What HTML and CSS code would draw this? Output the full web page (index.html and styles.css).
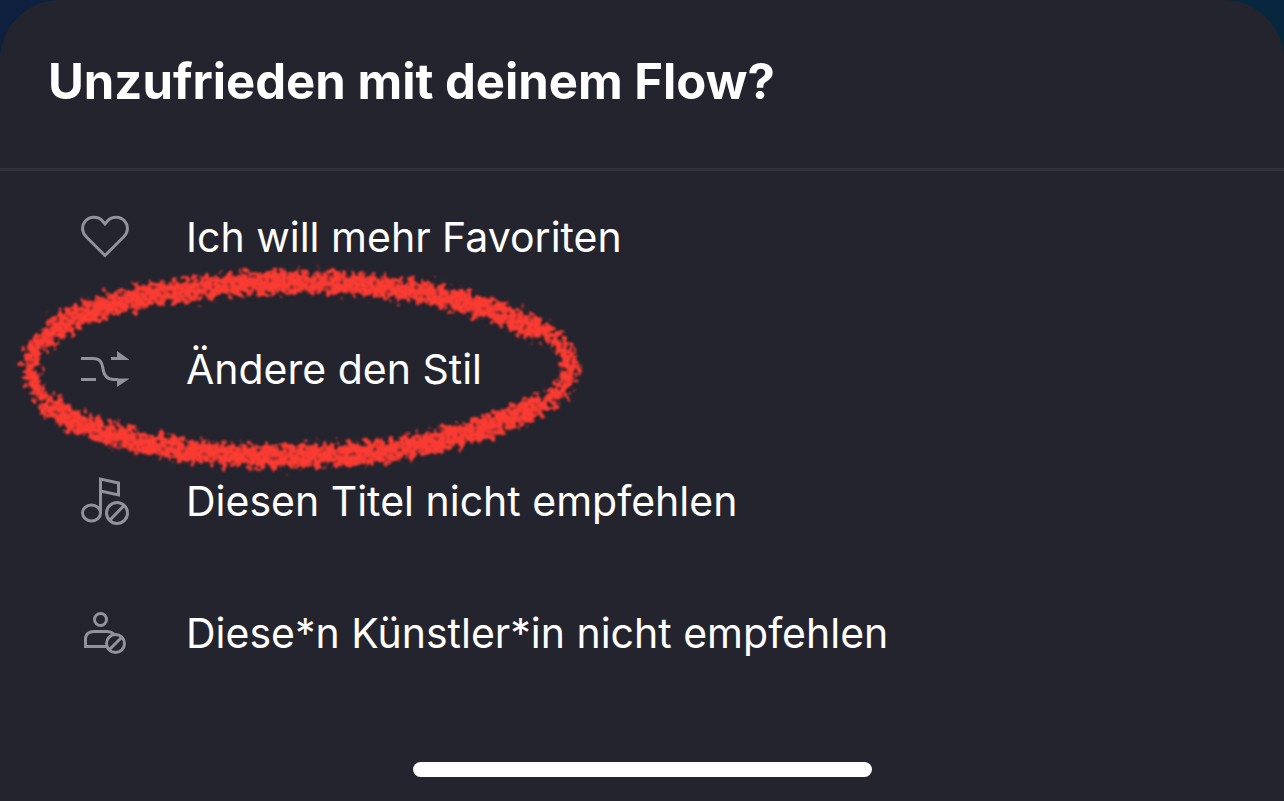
FILE: index.html
```html
<!DOCTYPE html>
<html lang="de">
<head>
<meta charset="utf-8">
<meta name="viewport" content="width=device-width, initial-scale=1">
<title>Unzufrieden mit deinem Flow?</title>
<link rel="stylesheet" href="styles.css">
</head>
<body>
<main class="sheet">
  <header class="sheet-header">
    <h1 class="title">Unzufrieden mit deinem Flow?</h1>
  </header>
  <ul class="options">
    <li class="option">
      <button class="option-button" type="button">
        <svg class="icon" viewBox="0 0 50 50" aria-hidden="true"><path d="M25 43.500 6.500 25C1.500 20 1.500 13.500 5 9.500C9.500 4 18 4 22.500 9L25 12 27.500 9C32 4 40.500 4 45 9.500C48.500 13.500 48.500 20 43.500 25Z"/></svg>
        <span>Ich will mehr Favoriten</span>
      </button>
    </li>
    <li class="option">
      <button class="option-button" type="button">
        <svg class="icon" viewBox="0 0 50 50" aria-hidden="true"><path d="M1 14.500H13C20 14.500 22 18 23 25C24 32 28 35.500 34 35.500H38M1 35.500H16M31 14.500H38"/><path class="solid" d="M37 7 49 15.500V16H37ZM37 34.500H49V35L37 43Z"/></svg>
        <span>Ändere den Stil</span>
      </button>
      <svg class="marker" viewBox="0 0 570 220" aria-hidden="true">
        <defs>
          <filter id="crayon" filterUnits="userSpaceOnUse" x="0" y="0" width="570" height="220">
            <feTurbulence type="fractalNoise" baseFrequency="0.16" numOctaves="3" seed="8" result="noise"/>
            <feDisplacementMap in="SourceGraphic" in2="noise" scale="22" xChannelSelector="R" yChannelSelector="G" result="rough"/>
            <feTurbulence type="fractalNoise" baseFrequency="0.24" numOctaves="2" seed="21" result="grain"/>
            <feColorMatrix in="grain" type="matrix" values="0 0 0 0 0  0 0 0 0 0  0 0 0 0 0  0 0 0 4 -0.600" result="holes"/>
            <feComposite in="rough" in2="holes" operator="in" result="textured"/>
            <feGaussianBlur in="textured" stdDeviation="0.800"/>
          </filter>
        </defs>
        <g filter="url(#crayon)">
          <path class="stroke-thin" d="M15 106C16 66 82 42 162 29C222 20 312 15 385 26C465 37 551 64 556 104C557 151 449 178 385 190C310 201 240 200 162 190C95 179 15 150 15 106Z"/>
          <path class="stroke-wide" d="M37 72C66 47 113 37 162 31C222 20 312 17 385 28C438 35 486 49 520 69M37 147C79 173 123 182 162 188C240 199 310 198 385 188C432 179 488 163 522 144"/>
        </g>
      </svg>
    </li>
    <li class="option">
      <button class="option-button" type="button">
        <svg class="icon" viewBox="0 0 50 50" aria-hidden="true"><ellipse cx="11.500" cy="37" rx="9" ry="8"/><path d="M20.500 37V3L38.500 7V19L20.500 15M29.500 44.500 44.500 29"/><circle cx="37" cy="37" r="10.500"/></svg>
        <span>Diesen Titel nicht empfehlen</span>
      </button>
    </li>
    <li class="option">
      <button class="option-button" type="button">
        <svg class="icon" viewBox="0 0 50 50" aria-hidden="true"><circle cx="20.500" cy="11.500" r="6"/><path d="M26 38.500H5.500V31C5.500 26 9 23.500 14 23.500H27C30 23.500 32 24.500 34 26M29.500 41.500 42 29"/><circle cx="35.500" cy="35.500" r="9"/></svg>
        <span>Diese*n Künstler*in nicht empfehlen</span>
      </button>
    </li>
  </ul>
  <div class="home-indicator"></div>
</main>
</body>
</html>
```
FILE: styles.css
```css
* {
  box-sizing: border-box;
}

body {
  margin: 0;
  background: linear-gradient(90deg, #0f203f, #07273f);
  color: #fff;
  font-family: Inter, "Liberation Sans", sans-serif;
}

.sheet {
  display: flex;
  flex-direction: column;
  min-height: 100vh;
  overflow: hidden;
  background: #24242e;
  border-radius: 60px 60px 0 0;
}

.sheet-header {
  padding: 50px 48px 54px;
  border-bottom: 3px solid #31313d;
}

.title {
  margin: 0;
  font-size: 49px;
  line-height: 64px;
  font-weight: 700;
}

.options {
  margin: 0;
  padding: 0;
  list-style: none;
}

.option {
  position: relative;
}

.option-button {
  display: flex;
  align-items: center;
  gap: 56px;
  width: 100%;
  padding: 40px 80px;
  border: 0;
  background: none;
  color: inherit;
  font: inherit;
  font-size: 41px;
  line-height: 52px;
  text-align: left;
  cursor: pointer;
}

.icon {
  flex: none;
  width: 50px;
  height: 50px;
  fill: none;
  stroke: #92929e;
  stroke-width: 3;
}

.icon .solid {
  fill: #92929e;
  stroke: none;
}

.marker {
  position: absolute;
  top: -42px;
  left: 15px;
  width: 570px;
  height: 220px;
  fill: none;
  stroke: #fb3a30;
  pointer-events: none;
}

.stroke-thin {
  stroke-width: 15;
}

.stroke-wide {
  stroke-width: 22;
  stroke-linecap: round;
}

.home-indicator {
  width: 36%;
  max-width: 459px;
  height: 15px;
  margin: auto auto 24px;
  border-radius: 8px;
  background: #fff;
}
```
